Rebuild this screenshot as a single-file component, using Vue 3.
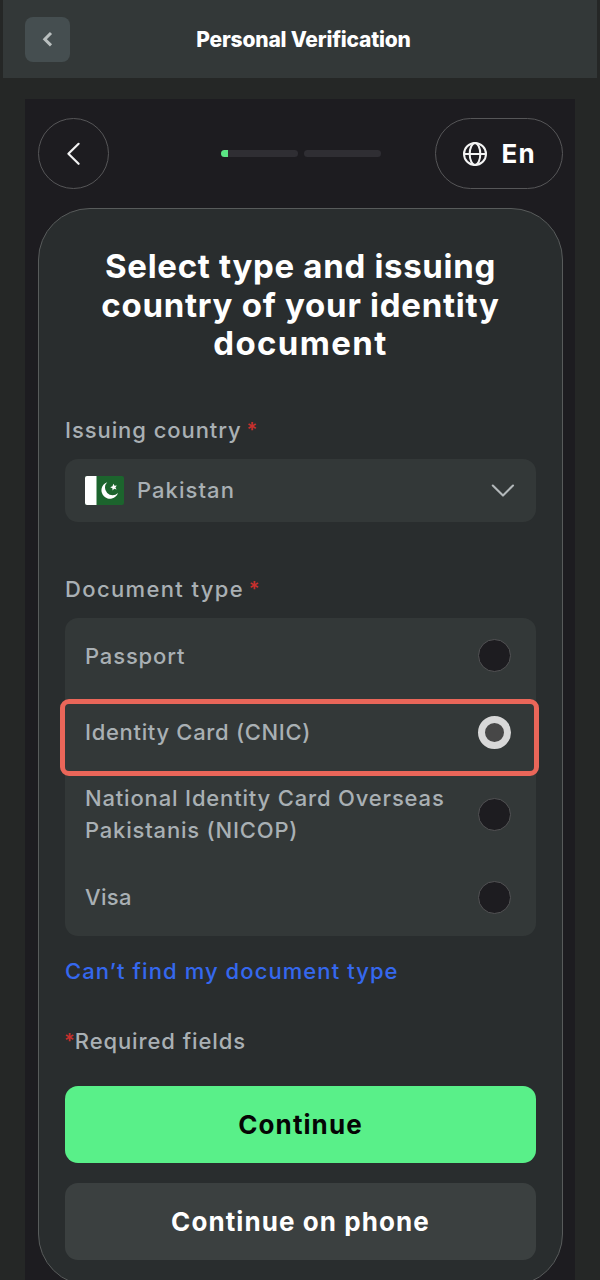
<template>
  <div class="page">
    <header class="topbar">
      <button class="topbar-back" aria-label="Back">
        <svg width="45" height="45" viewBox="0 0 45 45" fill="none">
          <path d="M26 16L19.8 22.2L26 28.4" stroke="#b9bfbf" stroke-width="3" />
        </svg>
      </button>
      <h1 class="topbar-title"><span class="t-title">Personal Verification</span></h1>
    </header>

    <main class="frame">
      <nav class="nav">
        <button class="nav-back" aria-label="Previous step">
          <svg width="68" height="68" viewBox="0 0 68 68" fill="none">
            <path d="M38.6 23.8L28.4 33.8L38.6 43.8" stroke="#f2f2f2" stroke-width="2.2" stroke-linecap="round" stroke-linejoin="round" />
          </svg>
        </button>
        <div class="progress">
          <div v-for="(value, i) in steps" :key="i" class="progress-step">
            <div class="progress-fill" :style="{ width: value + '%' }"></div>
          </div>
        </div>
        <button class="lang">
          <svg width="26" height="26" viewBox="0 0 26 26" fill="none" stroke="#f4f4f4" stroke-width="2">
            <circle cx="13" cy="13" r="11" />
            <ellipse cx="13" cy="13" rx="5.3" ry="11" />
            <path d="M2 13H24" />
          </svg>
          <span class="t-lang">En</span>
        </button>
      </nav>

      <section class="card">
        <h2 class="heading">
          <span class="h1">Select type and issuing</span>
          <span class="h2">country of your identity</span>
          <span class="h3">document</span>
        </h2>

        <label class="label"><span class="t-issuing">Issuing country</span> <i class="star">*</i></label>
        <div class="select">
          <svg class="flag" width="39" height="29" viewBox="0 0 39 29">
            <rect width="39" height="29" rx="2" fill="#1c642d" />
            <path d="M2 0H11.5V29H2Q0 29 0 27V2Q0 0 2 0Z" fill="#fff" />
            <path d="M22.2 6.2A8.5 8.5 0 1 0 33 17A7.2 7.2 0 1 1 22.2 6.2Z" fill="#fff" />
            <path d="M28.3 7.8L29.5 9.8L31.8 9.4L30.4 11.4L31.6 13.4L29.2 12.8L27.6 14.5L27.4 12.2L25.2 11.2L27.5 10.3Z" fill="#fff" />
          </svg>
          <span class="t-country">Pakistan</span>
          <svg class="chevron" width="24" height="14" viewBox="0 0 24 14" fill="none">
            <path d="M1.8 2.6L12 12.6L22 2.6" stroke="#b3b8ba" stroke-width="2.1" stroke-linecap="round" stroke-linejoin="round" />
          </svg>
        </div>

        <label class="label label-doc"><span class="t-doc">Document type</span> <i class="star">*</i></label>
        <div class="options">
          <div
            v-for="option in options"
            :key="option.id"
            :class="['option', option.id]"
            @click="selected = option.id"
          >
            <div class="option-text">
              <span v-for="(line, i) in option.lines" :key="i" :class="'line' + i">{{ line }}</span>
            </div>
            <span class="radio" :class="{ checked: selected === option.id }"></span>
            <div v-if="option.id === 'cnic'" class="highlight"></div>
          </div>
        </div>

        <a class="link"><span class="t-link">Can’t find my document type</span></a>
        <p class="required"><i class="star">*</i><span class="t-required">Required fields</span></p>

        <button class="btn primary"><span class="t-continue">Continue</span></button>
        <button class="btn secondary"><span class="t-phone">Continue on phone</span></button>
      </section>
    </main>
  </div>
</template>

<script setup>
import { ref } from 'vue'

const steps = [9, 0]
const selected = ref('cnic')

const options = [
  { id: 'passport', lines: ['Passport'] },
  { id: 'cnic', lines: ['Identity Card (CNIC)'] },
  { id: 'nicop', lines: ['National Identity Card Overseas', 'Pakistanis (NICOP)'] },
  { id: 'visa', lines: ['Visa'] }
]
</script>

<style>
body {
  margin: 0;
  background: #252726;
}
</style>

<style scoped>
.page {
  box-sizing: border-box;
  width: 600px;
  height: 1280px;
  overflow: hidden;
  background: #252726;
  font-family: Inter, "Open Sans", sans-serif;
  color: #a9b0b4;
}

button {
  box-sizing: border-box;
  padding: 0;
  margin: 0;
  border: 0;
  font: inherit;
  cursor: pointer;
}

svg {
  display: block;
  flex: none;
}

span {
  white-space: nowrap;
}

.topbar {
  box-sizing: border-box;
  display: grid;
  grid-template-columns: 45px 1fr 45px;
  align-items: center;
  height: 78px;
  margin: 0 3px;
  padding: 0 15px 0 22px;
  background: #333838;
}

.topbar-back {
  width: 45px;
  height: 45px;
  border-radius: 8px;
  background: #454e50;
}

.topbar-title {
  margin: 0;
  padding-top: 2px;
  text-align: center;
  font-size: 21px;
  line-height: 30px;
  font-weight: 800;
  letter-spacing: -0.2px;
  color: #fff;
}

.frame {
  box-sizing: border-box;
  height: 1190px;
  margin: 21px 25px 0;
  padding: 19px 12.5px 0 13px;
  background: #1d1c20;
}

.nav {
  display: flex;
  align-items: center;
  justify-content: space-between;
  height: 71px;
}

.nav-back {
  display: flex;
  align-items: center;
  justify-content: center;
  width: 71px;
  height: 71px;
  border: 1.5px solid #565658;
  border-radius: 50%;
  background: none;
}

.progress {
  display: flex;
  gap: 6px;
  width: 160px;
  margin-left: 58px;
}

.progress-step {
  flex: 1;
  height: 7px;
  border-radius: 4px;
  overflow: hidden;
  background: #2f2e33;
}

.progress-fill {
  height: 100%;
  background: #5be584;
}

.lang {
  display: flex;
  align-items: center;
  gap: 14px;
  width: 128px;
  height: 71px;
  padding-left: 26px;
  border: 1.5px solid #565658;
  border-radius: 36px;
  background: none;
  color: #fff;
  font-size: 26px;
  font-weight: 700;
}

.t-lang {
  letter-spacing: 1.2px;
}

.card {
  box-sizing: border-box;
  height: 1078px;
  margin-top: 19px;
  padding: 38px 25.5px 0 26px;
  border: 1.5px solid #585b5b;
  border-radius: 52px;
  background: #292d2e;
}

.heading {
  display: flex;
  flex-direction: column;
  align-items: center;
  margin: 0;
  font-size: 33px;
  line-height: 38.5px;
  font-weight: 700;
  color: #fff;
}

.h1 {
  letter-spacing: 0.68px;
}

.h2 {
  letter-spacing: 0.74px;
}

.h3 {
  letter-spacing: 1.4px;
}

.label {
  display: block;
  margin-top: 51px;
  font-size: 22px;
  line-height: 32px;
  font-weight: 500;
}

.label-doc {
  margin-top: 51px;
}

.t-issuing {
  letter-spacing: 0.93px;
}

.t-doc {
  letter-spacing: 1.36px;
}

.star {
  position: relative;
  top: -1px;
  margin-left: -1px;
  font-style: normal;
  font-weight: 600;
  font-size: 20px;
  line-height: 1;
  color: #c7302d;
}

.select {
  display: flex;
  align-items: center;
  height: 63px;
  margin-top: 13px;
  padding: 0 21.5px 0 20px;
  border-radius: 13px;
  background: #333838;
  font-size: 22px;
  font-weight: 500;
}

.t-country {
  letter-spacing: 1.05px;
}

.flag {
  margin-right: 13px;
}

.chevron {
  margin-left: auto;
}

.options {
  margin-top: 13px;
  border-radius: 13px;
  background: #333838;
}

.option {
  position: relative;
  display: flex;
  align-items: center;
  justify-content: space-between;
  height: 77px;
  padding: 0 24.5px 0 20px;
  font-size: 22px;
  line-height: 32px;
  font-weight: 500;
}

.option-text {
  display: flex;
  flex-direction: column;
  align-items: flex-start;
}

.option.nicop {
  height: 88px;
}

.nicop .option-text {
  padding-bottom: 2px;
}

.option.passport {
  height: 76px;
}

.passport .line0 {
  letter-spacing: 0.85px;
}

.cnic .line0 {
  letter-spacing: 0.68px;
}

.nicop .line0 {
  letter-spacing: 0.83px;
}

.nicop .line1 {
  letter-spacing: 0.8px;
}

.visa .line0 {
  letter-spacing: 0.3px;
}

.radio {
  box-sizing: border-box;
  width: 33px;
  height: 33px;
  margin-right: 0.5px;
  border: 1.5px solid #525254;
  border-radius: 50%;
  background: #1d1c20;
}

.radio.checked {
  border: 7.5px solid #d8d8d8;
  background: #474747;
}

.highlight {
  position: absolute;
  inset: 5px -3px -5px -5px;
  border: 5px solid #ea6659;
  border-radius: 9px;
  z-index: 1;
}

.link {
  display: block;
  margin-top: 19px;
  font-size: 22px;
  line-height: 32px;
  font-weight: 500;
  color: #3568ee;
}

.t-link {
  letter-spacing: 1.08px;
}

.required {
  margin: 38px 0 29px;
  font-size: 22px;
  line-height: 32px;
  font-weight: 500;
}

.t-required {
  letter-spacing: 0.9px;
}

.btn {
  display: flex;
  align-items: center;
  justify-content: center;
  width: 100%;
  height: 77px;
  border-radius: 13px;
  font-size: 26px;
  font-weight: 700;
}

.t-continue,
.t-phone {
  letter-spacing: 1.08px;
}

.primary {
  background: #59f089;
  color: #050505;
}

.secondary {
  margin-top: 20px;
  background: #3b4040;
  color: #fff;
}
</style>
